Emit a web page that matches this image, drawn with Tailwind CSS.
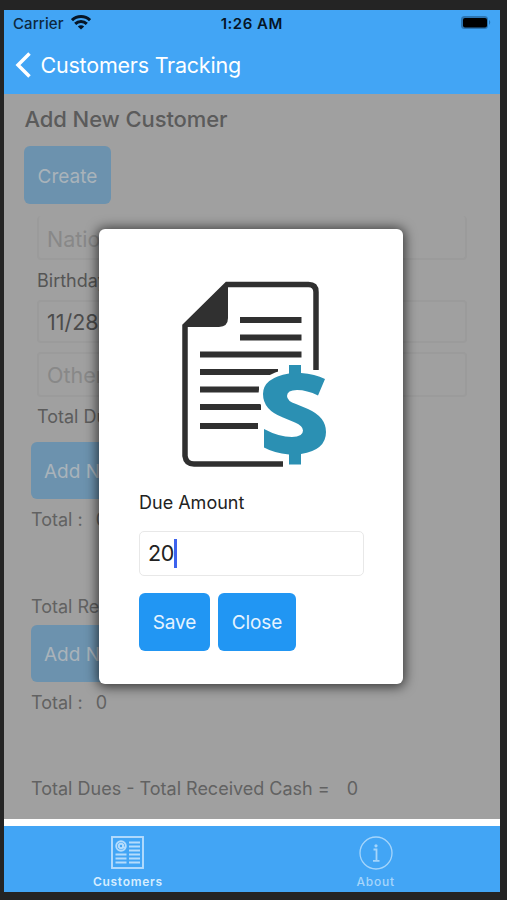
<!DOCTYPE html>
<html lang="en">
<head>
<meta charset="utf-8">
<title>Customers Tracking</title>
<script src="https://cdn.jsdelivr.net/npm/@tailwindcss/browser@4"></script>
</head>
<body class="h-[900px] w-[507px] overflow-hidden bg-[#242424] pt-[9.5px] pl-[4px] font-['Inter','Liberation_Sans',sans-serif]">
<div class="relative flex h-[882px] w-[495.5px] flex-col bg-white whitespace-nowrap">
  <header class="h-[84.5px] shrink-0 bg-[#42a5f5]">
    <div class="grid h-[27px] grid-cols-3 items-center pr-[7px] pl-[9px] text-[15px] leading-none text-[#0d2840]">
      <div class="flex items-center gap-[7px]">
        <span class="text-[15px] font-medium tracking-[0.1px]">Carrier</span>
        <svg class="h-[15px] w-[20px] -translate-y-[1px]" viewBox="0 0 20 15" fill="none" stroke="#061526" stroke-width="3"><path d="M1 5.2C6 .4 14 .4 19 5.2"/><path d="M4.2 8.8C7.5 5.6 12.5 5.6 15.8 8.8"/><path d="M10 14.6 6.8 11.4c1.8-1.7 4.6-1.7 6.4 0z" fill="#061526" stroke="none"/></svg>
      </div>
      <span class="-translate-x-[1px] text-center font-semibold tracking-[0.5px] text-[#061526]">1:26 AM</span>
      <svg class="h-[15px] w-[32px] justify-self-end -translate-y-[1px]" viewBox="0 0 32 15"><rect x="1" y="1" width="27" height="13" rx="3.5" fill="#2c75b2"/><rect x="3" y="3" width="24" height="9.500" rx="2" fill="#000"/><path d="M29 5q2.500 2 0 5z" fill="#2c75b2"/></svg>
    </div>
    <div class="flex h-[57px] items-center pl-[11px] text-white">
      <svg class="mr-[9.500px] h-[26px] w-[16px]" viewBox="0 0 16 26" fill="none" stroke="white" stroke-width="3.500"><path d="M14.500 1.500 3 13 14.500 24.500"/></svg>
      <h1 class="translate-y-[1px] text-[21.5px] leading-none tracking-[-0.22px]">Customers Tracking</h1>
    </div>
  </header>

  <main class="flex h-[725px] shrink-0 flex-col bg-[#a0a0a0] pl-[27px] text-[18px] leading-[20px] text-[#626262]">
    <h2 class="mt-[14px] ml-[-6.500px] h-[22px] text-[22px] leading-[22px] font-medium tracking-[-0.1px] text-[#5b5b5b]">Add New Customer</h2>
    <button class="mt-[16px] ml-[-7px] h-[58px] w-[87px] shrink-0 rounded-[6px] bg-[#6c92ae] pt-[3px] text-[19px] text-[#a9b3ba]">Create</button>
    <div class="mt-[12px] ml-[6px] h-[44px] w-[430px] shrink-0 overflow-hidden rounded-[4px] border-2 border-t-0 border-[#9b9b9b] px-[8px] text-[21.5px] leading-[46px] text-[#888]">National ID</div>
    <div class="mt-[10.500px] ml-[6px] text-[#555]">Birthday</div>
    <div class="mt-[9px] ml-[6px] h-[43px] w-[430px] shrink-0 rounded-[4px] border-2 border-[#9b9b9b] px-[8px] text-[21.5px] leading-[40px] text-[#4c4c4c]">11/28/2020</div>
    <div class="mt-[9px] ml-[6px] h-[45px] w-[430px] shrink-0 rounded-[4px] border-2 border-[#9b9b9b] px-[8px] text-[21.5px] leading-[42px] text-[#888]">Other Info</div>
    <div class="mt-[10px] ml-[6px] text-[#5c5c5c]">Total Dues</div>
    <button class="mt-[15.500px] h-[57px] w-[110px] shrink-0 overflow-hidden rounded-[6px] bg-[#6c92ae] pt-[3px] pl-[13px] text-left text-[19px] text-[#a9b3ba]">Add New</button>
    <div class="mt-[10.500px] flex gap-[13px]"><span>Total :</span><span>0</span></div>
    <div class="mt-[67px]">Total Re<span class="text-[17px]">ceived</span></div>
    <button class="mt-[8.500px] h-[57px] w-[110px] shrink-0 overflow-hidden rounded-[6px] bg-[#6c92ae] pt-[3px] pl-[13px] text-left text-[19px] text-[#a9b3ba]">Add New</button>
    <div class="mt-[10.500px] flex gap-[13px]"><span>Total :</span><span>0</span></div>
    <div class="mt-[66.500px] flex gap-[17px]"><span>Total Dues - Total Received Cash =</span><span>0</span></div>
  </main>

  <nav class="mt-[7px] grid h-[65.500px] shrink-0 grid-cols-2 bg-[#42a5f5] text-[12px] leading-[14px]">
    <div class="flex flex-col items-center pt-[9.500px] text-[#d5edff]">
      <svg class="h-[33px] w-[33px]" viewBox="0 0 33 33" fill="none" stroke="#b5dcfc" stroke-width="1.900"><rect x="1" y="1" width="31" height="31"/><circle cx="10" cy="10" r="4.800"/><circle cx="10" cy="10" r="2.200"/><path d="M12 8v3q1.500 2 2.500-.5M18 6.500h11M18 10.500h11M18 14.500h11M18 18.500h11M18 22.500h11M18 26.500h11M4.500 18.500h11M4.500 22.500h11M4.500 26.500h11"/></svg>
      <span class="mt-[6px] font-semibold tracking-[0.7px]">Customers</span>
    </div>
    <div class="flex flex-col items-center pt-[9.500px] text-[#a5d5fb]">
      <svg class="h-[34px] w-[34px]" viewBox="0 0 34 34" fill="none" stroke="#a5d5fb" stroke-width="1.300"><circle cx="17" cy="17" r="16"/><path d="M14.500 13.500h3v11M14 24.800h6.500" stroke-width="1.800"/><circle cx="17" cy="9.800" r="1.600" fill="#a5d5fb" stroke="none"/></svg>
      <span class="mt-[5px] font-medium tracking-[0.8px]">About</span>
    </div>
  </nav>

  <section class="absolute top-[219px] left-[95px] flex h-[455.500px] w-[304px] flex-col rounded-[6px] bg-white px-[40px] text-[#222] shadow-[0_1px_12px_2px_rgba(0,0,0,0.65)]">
    <svg class="mt-[51.500px] h-[190px] w-[152px] shrink-0 translate-x-[41px]" viewBox="180 280 152 190">
      <g fill="none" stroke="#303030">
        <path d="M316 370V292q0-7.500-7.500-7.500H227L185 326V456q1 8 9 8H283" stroke-width="5.500"/>
        <path d="M185 327 228 284V318q0 8.500-9 9z" fill="#303030" stroke="none"/>
        <path d="M240 320h61.500M240 337.500h61.500M200 354.500h101.500M200 372h78M200 389.500h59M200 407h61M200 426h58" stroke-width="6"/>
      </g>
      <path d="M325 379 318 395.500Q307 390 297 390 287 390 287 396 287 401 296 404L308 409Q326 417 326 432 326 450 301 454V464.500H289V454.500Q274 453 264 447.500V429Q279 437 292 437 303 437 303 430.500 303 426 295 422.500L283 417.500Q263 410 263 394 263 378 289 373.500V365H301V373Q315 374 325 379Z" fill="#2b90b3" stroke="#fff" stroke-width="9" paint-order="stroke"/>
    </svg>
    <label class="mt-[22.500px] text-[18px] leading-[20px]">Due Amount</label>
    <div class="mt-[18px] flex h-[45px] w-[224.500px] shrink-0 items-center rounded-[5px] border-[1.500px] border-[#e8e8e8] pl-[8px] text-[21.5px] tracking-[-0.3px]"><span>20</span><span class="h-[29px] w-[2.500px] bg-[#3d63ee]"></span></div>
    <div class="mt-[17.500px] flex gap-[8px] text-[19px] tracking-[-0.1px] text-[#e5f3ff]">
      <button class="h-[58px] w-[71px] rounded-[6px] bg-[#2196f3] pt-[2px]">Save</button>
      <button class="h-[58px] w-[78px] rounded-[6px] bg-[#2196f3] pt-[2px]">Close</button>
    </div>
  </section>
</div>
</body>
</html>
